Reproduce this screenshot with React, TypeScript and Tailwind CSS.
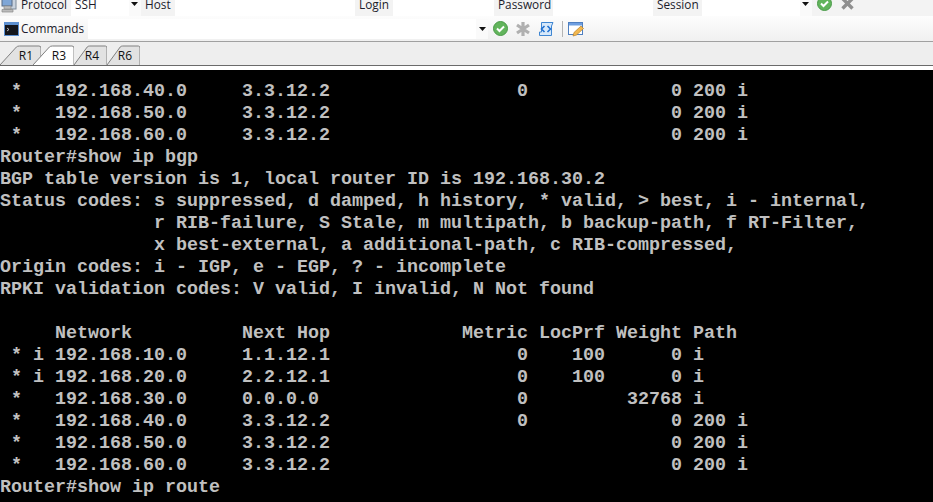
const lines = [
  " *   192.168.40.0     3.3.12.2                 0             0 200 i",
  " *   192.168.50.0     3.3.12.2                               0 200 i",
  " *   192.168.60.0     3.3.12.2                               0 200 i",
  "Router#show ip bgp",
  "BGP table version is 1, local router ID is 192.168.30.2",
  "Status codes: s suppressed, d damped, h history, * valid, > best, i - internal,",
  "              r RIB-failure, S Stale, m multipath, b backup-path, f RT-Filter,",
  "              x best-external, a additional-path, c RIB-compressed,",
  "Origin codes: i - IGP, e - EGP, ? - incomplete",
  "RPKI validation codes: V valid, I invalid, N Not found",
  " ",
  "     Network          Next Hop            Metric LocPrf Weight Path",
  " * i 192.168.10.0     1.1.12.1                 0    100      0 i",
  " * i 192.168.20.0     2.2.12.1                 0    100      0 i",
  " *   192.168.30.0     0.0.0.0                  0         32768 i",
  " *   192.168.40.0     3.3.12.2                 0             0 200 i",
  " *   192.168.50.0     3.3.12.2                               0 200 i",
  " *   192.168.60.0     3.3.12.2                               0 200 i",
  "Router#show ip route",
];

function Caret({ top }: { top?: boolean }) {
  return (
    <div className={top ? "flex h-full w-[12px] shrink-0 items-start justify-center bg-[#fafafa] pt-[2px] pr-[2px]" : "flex h-full w-[12px] shrink-0 items-center justify-center bg-[#fafafa]"}>
      <svg width="7" height="4" viewBox="0 0 7 4"><path d="M0 0h7L3.5 4z" fill="#111" /></svg>
    </div>
  );
}

function CheckIcon() {
  return (
    <svg width="15" height="15" viewBox="0 0 15 15" className="shrink-0">
      <circle cx="7.5" cy="7.5" r="7" fill="#62b45c" stroke="#4a9a48" />
      <path d="M4 7.5l2.5 2.5L11 5.5" fill="none" stroke="#fff" strokeWidth="2" />
    </svg>
  );
}

function CrossIcon() {
  return (
    <svg width="15" height="15" viewBox="0 0 15 15" className="shrink-0">
      <path d="M2.5 2.5l10 10M12.5 2.5l-10 10" stroke="#8f8f8f" strokeWidth="3.4" />
    </svg>
  );
}

function StarIcon() {
  return (
    <svg width="16" height="16" viewBox="0 0 16 16" className="shrink-0">
      <path d="M8 1v14M2 4l12 8M14 4L2 12" stroke="#b0b0b0" strokeWidth="3.2" />
    </svg>
  );
}

function ScriptIcon() {
  return (
    <svg width="16" height="16" viewBox="0 0 16 16" className="shrink-0">
      <path d="M4 1.5h11L13.5 5v9.5H1.5V11H3.5V1.5z" fill="#d6e8fa" stroke="#3f86d2" />
      <path d="M6.5 5L3.5 8l3 3M9.5 5l3 3-3 3" fill="none" stroke="#1f6fd0" strokeWidth="1.6" />
    </svg>
  );
}

function NoteIcon() {
  return (
    <svg width="17" height="16" viewBox="0 0 17 16" className="shrink-0">
      <rect x="0.5" y="1.5" width="14" height="12" fill="#fff" stroke="#4f7fc0" />
      <rect x="1" y="2" width="13" height="2.5" fill="#6f9fe0" />
      <path d="M5 15l1-3.5 7-6.5 2.5 2.5-7 6.5z" fill="#f2b84f" stroke="#b8802a" strokeWidth="0.7" />
    </svg>
  );
}

function MonitorIcon() {
  return (
    <svg width="17" height="17" viewBox="0 0 17 17" className="shrink-0">
      <rect x="5" y="1" width="11" height="12" fill="#c9d3df" stroke="#7d8a99" />
      <rect x="2" y="1" width="10" height="9" fill="#7fa6d6" stroke="#5a6d85" />
      <path d="M4 10h7v3H4zM2 13.5h11v2.5H2z" fill="#bcbcbc" stroke="#8a8a8a" strokeWidth="0.7" />
    </svg>
  );
}

function TerminalIcon() {
  return (
    <svg width="15" height="14" viewBox="0 0 15 14" className="shrink-0">
      <rect x="0" y="0" width="15" height="14" fill="#5c8fd0" />
      <rect x="1" y="3" width="13" height="10" fill="#14161c" />
      <path d="M3 6l2 1.5L3 9" fill="none" stroke="#ddd" strokeWidth="0.8" />
    </svg>
  );
}

function Label({ text, width }: { text: string; width: string }) {
  return <div className={`h-full shrink-0 pl-[4px] ${width}`}><span className="mt-[-4px] block leading-[16px]">{text}</span></div>;
}

function Tab({ name, active, width }: { name: string; active?: boolean; width: string }) {
  return (
    <div className={`relative h-[20px] shrink-0 ${width}`}>
      <svg className="absolute inset-0 h-full w-full" viewBox="0 0 40 20" preserveAspectRatio="none">
        <path
          d="M0 20L16 2Q17 1 19 1H38Q40 1 40 3V20"
          fill={active ? "#ffffff" : "#e2e2e2"}
          stroke="#808080"
          strokeWidth="1"
          vectorEffect="non-scaling-stroke"
        />
      </svg>
      <span className="absolute inset-0 flex items-center justify-end pr-[8px] pt-[1px] text-[12px] text-[#111]">{name}</span>
    </div>
  );
}

export default function App() {
  return (
    <div className="flex h-[502px] w-[933px] flex-col overflow-hidden bg-black font-['Open_Sans',sans-serif] text-[11.8px] text-[#1b1b2b]">
      <div className="flex h-[16px] shrink-0 items-stretch overflow-hidden bg-[#f3f3f3]">
        <div className="h-full w-[21px] shrink-0"><div className="mt-[-4px]"><MonitorIcon /></div></div>
        <div className="h-full w-[50px] shrink-0"><span className="mt-[-4px] block leading-[16px]">Protocol</span></div>
        <div className="flex h-full w-[70px] shrink-0 justify-between bg-white pl-[4px]">
          <span className="mt-[-4px] block leading-[16px]">SSH</span>
          <Caret top />
        </div>
        <Label text="Host" width="w-[34px]" />
        <div className="w-[180px] shrink-0 bg-white" />
        <Label text="Login" width="w-[38px]" />
        <div className="w-[101px] shrink-0 bg-white" />
        <Label text="Password" width="w-[59px]" />
        <div className="w-[100px] shrink-0 bg-white" />
        <Label text="Session" width="w-[49px]" />
        <div className="flex w-[110px] shrink-0 justify-end bg-white"><Caret top /></div>
        <div className="flex h-full gap-[8px] pl-[5px]">
          <div className="mt-[-4px] flex gap-[8px]"><CheckIcon /><CrossIcon /></div>
        </div>
      </div>

      <div className="flex h-[26px] shrink-0 items-center border-b border-[#a0a0a0] bg-gradient-to-b from-[#fdfdfd] to-[#f0f0f0]">
        <div className="flex w-[21px] shrink-0 justify-center pl-[1px]"><TerminalIcon /></div>
        <span className="w-[67px] shrink-0">Commands</span>
        <div className="flex h-[20px] w-[400px] shrink-0 justify-end bg-white"><Caret /></div>
        <div className="ml-[5px] flex items-center gap-[7px]">
          <CheckIcon />
          <StarIcon />
          <ScriptIcon />
          <div className="ml-[1px] h-[16px] w-px bg-[#b4b4b4]" />
          <div className="ml-[-2px]"><NoteIcon /></div>
        </div>
      </div>

      <div className="flex h-[24px] shrink-0 items-end border-b border-[#6a6a6a] bg-[#eeeeee]">
        <Tab name="R1" width="w-[41px]" />
        <Tab name="R3" active width="w-[41px] ml-[-8px]" />
        <Tab name="R4" width="w-[33px]" />
        <Tab name="R6" width="w-[33px]" />
      </div>
      <div className="h-[4px] shrink-0 bg-white" />

      <pre className="flex-1 overflow-hidden bg-black pt-[11px] font-['Liberation_Mono',monospace] text-[18.33px] leading-[22px] font-bold text-[#c0c0c0]">
        {lines.join("\n")}
      </pre>
    </div>
  );
}
